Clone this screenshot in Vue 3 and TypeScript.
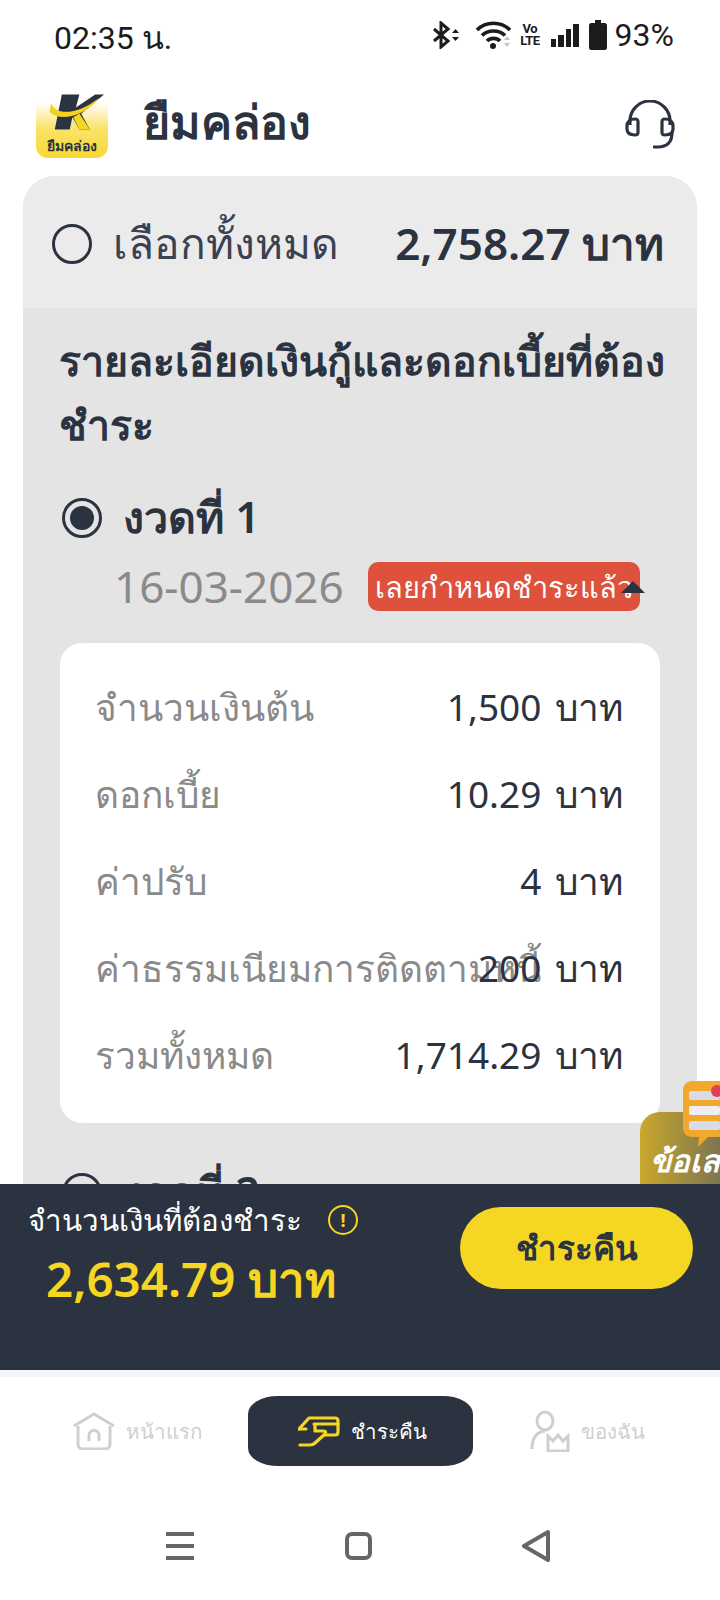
<script setup lang="ts">
const rows: { id: number; label: string; value: string }[] = [
  { id: 1, label: 'จำนวนเงินต้น', value: '1,500' },
  { id: 2, label: 'ดอกเบี้ย', value: '10.29' },
  { id: 3, label: 'ค่าปรับ', value: '4' },
  { id: 4, label: 'ค่าธรรมเนียมการติดตามหนี้', value: '200' },
  { id: 5, label: 'รวมทั้งหมด', value: '1,714.29' }
];
</script>

<template>
  <div class="screen">
    <div class="status-bar">
      <span class="time">02:35 น.</span>
      <div class="status-icons">
        <svg class="ic-bt" width="30" height="28" viewBox="0 0 30 28" fill="none">
          <path d="M3 8l14 12-7 6V2l7 6L3 20" stroke="#1c1c1c" stroke-width="3" />
          <path d="M21 12l3.500-4 3.500 4zM21 16l3.500 4 3.500-4z" fill="#1c1c1c" />
        </svg>
        <svg class="ic-wifi" width="38" height="30" viewBox="0 0 38 30" fill="none">
          <path d="M2 10c9-9 24-9 33 0M7 15.500c6-6 17-6 23 0M12 21c3.500-3.500 9.500-3.500 13 0" stroke="#1c1c1c" stroke-width="3.600" />
          <circle cx="18" cy="26" r="3" fill="#1c1c1c" />
          <path d="M29 20l3-4 3 4zM29 23l3 4 3-4z" fill="#c4c4c4" />
        </svg>
        <div class="volte"><span>Vo</span><span>LTE</span></div>
        <div class="signal">
          <i style="height: 8px"></i>
          <i style="height: 12px"></i>
          <i style="height: 18px"></i>
          <i style="height: 23px"></i>
        </div>
        <svg class="ic-batt" width="18" height="30" viewBox="0 0 18 30">
          <path d="M6 0h6v3h3.500A2.500 2.500 0 0 1 18 5.500V27.500A2.500 2.500 0 0 1 15.500 30H2.500A2.500 2.500 0 0 1 0 27.500V5.500A2.500 2.500 0 0 1 2.500 3H6z" fill="#1c1c1c" />
        </svg>
        <span class="pct">93%</span>
      </div>
    </div>

    <header class="app-header">
      <div class="logo">
        <svg class="logo-k" width="58" height="40" viewBox="0 0 66 44">
          <path d="M18 2h20l-4 15L56 2h10L40 24l10 18H38L30 28l-3 14H10z" fill="#2b3240" />
          <path d="M38 24l12 18H38L31 28z" fill="#f5d623" />
          <path d="M6 12c4 14 30 14 54-6-14 20-44 28-56 16z" fill="#f5d01e" />
        </svg>
        <span class="logo-text">ยืมคล่อง</span>
      </div>
      <h1 class="app-title">ยืมคล่อง</h1>
      <svg class="headset" width="50" height="50" viewBox="0 0 50 50" fill="none" stroke="#2b3240" stroke-width="3.200">
        <path d="M5 25V21a20 20 0 0 1 40 0v4" />
        <path d="M10 19c-5 0-8 3-8 7v3c0 4 3 6 8 6 3 0 3-1 3-3V22c0-2 0-3-3-3z" />
        <path d="M40 19c5 0 8 3 8 7v3c0 4-3 6-8 6-3 0-3-1-3-3V22c0-2 0-3 3-3z" />
        <path d="M47 33c0 9-5 14-14 14h-5" />
      </svg>
    </header>

    <main class="content">
      <section class="card">
        <div class="select-all">
          <span class="radio"></span>
          <span class="select-label">เลือกทั้งหมด</span>
          <span class="select-total">2,758.27 บาท</span>
        </div>
        <div class="details">
          <h2 class="details-title">รายละเอียดเงินกู้และดอกเบี้ยที่ต้องชำระ</h2>
          <div class="term-head">
            <span class="radio checked"></span>
            <span class="term-name">งวดที่ 1</span>
          </div>
          <div class="term-sub">
            <span class="term-date">16-03-2026</span>
            <span class="tag">เลยกำหนดชำระแล้ว<i class="caret"></i></span>
          </div>
          <div class="breakdown">
            <div v-for="row in rows" :key="row.id" class="row">
              <span class="row-label">{{ row.label }}</span>
              <span class="row-value">{{ row.value }} บาท</span>
            </div>
          </div>
          <div class="term-head next">
            <span class="radio"></span>
            <span class="term-name">งวดที่ 2</span>
          </div>
        </div>
      </section>

      <div class="promo">
        <svg class="promo-bubble" width="38" height="68" viewBox="0 0 38 68">
          <path d="M10 2h28v56H26l-10 10 1-10h-7c-5 0-9-4-9-9V11C1 6 5 2 10 2z" fill="#f0a92c" />
          <rect x="7" y="12" width="31" height="9" rx="2" fill="#d9dce6" />
          <rect x="7" y="27" width="31" height="9" rx="2" fill="#eceef2" />
          <rect x="7" y="42" width="31" height="9" rx="2" fill="#d9dce6" />
          <circle cx="35" cy="12" r="6" fill="#e0405a" />
        </svg>
        <span class="promo-text">ข้อเสนอ</span>
      </div>
    </main>

    <section class="pay-bar">
      <div class="pay-info">
        <div class="pay-label">
          <span>จำนวนเงินที่ต้องชำระ</span>
          <span class="pay-hint">!</span>
        </div>
        <div class="pay-amount">2,634.79 บาท</div>
      </div>
      <button class="pay-btn">ชำระคืน</button>
    </section>

    <nav class="tabs">
      <div class="tab">
        <svg width="42" height="38" viewBox="0 0 42 38" fill="none" stroke="#cfcfcf" stroke-width="3">
          <path d="M1 14L21 2l20 12" />
          <path d="M5 14v18c0 3 2 5 5 5h22c3 0 5-2 5-5V14" />
          <path d="M16 29v-6c0-6 10-6 10 0v6" />
        </svg>
        <span>หน้าแรก</span>
      </div>
      <div class="tab active">
        <svg width="42" height="31" viewBox="0 0 42 31" fill="none" stroke="#f5d623" stroke-width="3.200" stroke-linejoin="round" stroke-linecap="round">
          <path d="M1 13L11 2H37Q40 2 40 5V16Q40 19 37 19H26" />
          <path d="M16 8H40M1 13H8" />
          <path d="M17 9V15H25Q29 15 27 18L17 27Q15 29 12 29H2" />
        </svg>
        <span>ชำระคืน</span>
      </div>
      <div class="tab">
        <svg width="40" height="42" viewBox="0 0 40 42" fill="none" stroke="#cfcfcf" stroke-width="3">
          <ellipse cx="15" cy="11" rx="8" ry="9" />
          <path d="M2 39c0-10 4-17 13-18" />
          <path d="M18 26l5 5 5-6 5 6 5-5v15H18z" />
        </svg>
        <span>ของฉัน</span>
      </div>
    </nav>

    <div class="sys-nav">
      <div class="sys-menu"><i></i><i></i><i></i></div>
      <span class="sys-home"></span>
      <svg class="sys-back" width="30" height="32" viewBox="0 0 30 32" fill="none" stroke="#666" stroke-width="4" stroke-linejoin="round">
        <path d="M27 2L3 16l24 14z" />
      </svg>
    </div>
  </div>
</template>

<style scoped>
.screen {
  position: relative;
  display: flex;
  flex-direction: column;
  width: 720px;
  height: 1600px;
  overflow: hidden;
  background: #fff;
  color: #2b3240;
  font-family: "Noto Sans", "Open Sans", sans-serif;
}

.status-bar {
  display: flex;
  flex: none;
  align-items: center;
  justify-content: space-between;
  height: 74px;
  padding: 0 46px 0 54px;
  color: #1c1c1c;
  font-family: Roboto, sans-serif;
}

.time {
  font-size: 32px;
}

.status-icons {
  display: flex;
  align-items: center;
  margin-top: -4px;
}

.ic-bt {
  margin-right: 14px;
}

.ic-wifi {
  margin-right: 7px;
}

.volte {
  display: flex;
  flex-direction: column;
  margin-right: 11px;
  font-size: 13px;
  font-weight: 700;
  letter-spacing: -0.5px;
  line-height: 12px;
  text-align: center;
}

.signal {
  display: flex;
  align-items: flex-end;
  gap: 2px;
  margin-right: 10px;
}

.signal i {
  display: block;
  width: 5.500px;
  background: #1c1c1c;
}

.ic-batt {
  margin-right: 8px;
}

.pct {
  font-size: 32px;
}

.app-header {
  display: flex;
  flex: none;
  align-items: center;
  height: 102px;
  padding: 0 45px 0 36px;
}

.logo {
  position: relative;
  flex: none;
  width: 72px;
  height: 66px;
  border-radius: 0 0 12px 12px;
  background: linear-gradient(#fff 15%, #fbe36b 55%, #f7d732);
}

.logo-k {
  position: absolute;
  top: 0;
  left: 10px;
}

.logo-text {
  position: absolute;
  right: 0;
  bottom: 3px;
  left: 0;
  color: #2b3240;
  font-size: 14px;
  font-weight: 700;
  line-height: 18px;
  text-align: center;
}

.app-title {
  flex: 1;
  margin: 0 0 6px 35px;
  font-size: 46.500px;
  font-weight: 600;
}

.content {
  position: relative;
  flex: none;
  height: 1008px;
  overflow: hidden;
  padding: 0 23px;
  box-sizing: border-box;
}

.card {
  border-radius: 32px 32px 0 0;
  overflow: hidden;
  background: #e4e4e4;
}

.select-all {
  display: flex;
  align-items: center;
  box-sizing: border-box;
  height: 132px;
  padding: 4px 33px 0 29px;
  background: #ebebec;
}

.radio {
  flex: none;
  display: flex;
  align-items: center;
  justify-content: center;
  width: 40px;
  height: 40px;
  box-sizing: border-box;
  border: 3.500px solid #2b3240;
  border-radius: 50%;
}

.radio.checked::after {
  content: "";
  width: 24px;
  height: 24px;
  border-radius: 50%;
  background: #2b3240;
}

.select-label {
  flex: 1;
  margin-left: 21px;
  font-size: 42.500px;
  color: #3a4150;
  white-space: nowrap;
}

.select-total {
  font-size: 44px;
  font-weight: 600;
  white-space: nowrap;
}

.details {
  padding: 20px 37px 0 36px;
}

.details-title {
  margin: 0 -12px 0 0;
  font-size: 41px;
  font-weight: 600;
  line-height: 64px;
}

.term-head {
  display: flex;
  align-items: center;
  height: 40px;
  margin-top: 42px;
  padding-left: 3px;
}

.term-name {
  margin-left: 21px;
  font-size: 43px;
  font-weight: 600;
  white-space: nowrap;
}

.term-sub {
  display: flex;
  align-items: center;
  margin-top: 18px;
  padding-left: 55px;
}

.term-date {
  width: 254px;
  color: #8a8a8a;
  font-size: 44px;
  white-space: nowrap;
}

.tag {
  position: relative;
  box-sizing: border-box;
  width: 272px;
  height: 49px;
  padding-left: 7px;
  border-radius: 10px;
  background: #de513d;
  color: #fff;
  font-size: 29px;
  line-height: 49px;
  white-space: nowrap;
}

.caret {
  position: absolute;
  top: 19px;
  right: -5px;
  width: 0;
  height: 0;
  border-right: 12px solid transparent;
  border-bottom: 12px solid #2b3240;
  border-left: 12px solid transparent;
}

.breakdown {
  box-sizing: border-box;
  height: 480px;
  margin: 27px 0 0 1px;
  padding: 21px 37px 0 35px;
  border-radius: 22px;
  background: #fff;
}

.row {
  position: relative;
  display: flex;
  align-items: center;
  justify-content: flex-end;
  height: 87px;
  font-size: 37px;
}

.row-label {
  position: absolute;
  left: 0;
  color: #8a8a8a;
  white-space: nowrap;
}

.row-value {
  position: relative;
  white-space: nowrap;
  word-spacing: 4px;
}

.term-head.next {
  margin-top: 50px;
}

.promo {
  position: absolute;
  right: 0;
  bottom: 0;
  width: 80px;
  height: 72px;
  border-radius: 20px 0 0 0;
  background: linear-gradient(90deg, #c9a82c, #7d7550);
}

.promo-bubble {
  position: absolute;
  top: -33px;
  right: 0;
}

.promo-text {
  position: absolute;
  top: 24px;
  left: 10px;
  color: #fff;
  font-size: 31px;
  font-style: italic;
  font-weight: 700;
  white-space: nowrap;
}

.pay-bar {
  position: relative;
  display: flex;
  flex: none;
  box-sizing: border-box;
  height: 186px;
  padding: 0 27px 0 28px;
  justify-content: space-between;
  background: #2b3240;
}

.pay-label {
  display: flex;
  align-items: center;
  height: 36px;
  margin-top: 18px;
  color: #fff;
  font-size: 29.500px;
  white-space: nowrap;
}

.pay-hint {
  display: flex;
  align-items: center;
  justify-content: center;
  box-sizing: border-box;
  width: 30px;
  height: 30px;
  margin-left: 26px;
  border: 2.500px solid #f5d623;
  border-radius: 50%;
  color: #f5d623;
  font-size: 18px;
  font-weight: 700;
}

.pay-amount {
  margin: 11px 0 0 18px;
  color: #f5d623;
  font-size: 47.500px;
  font-weight: 600;
  line-height: 60px;
  white-space: nowrap;
}

.pay-btn {
  width: 233px;
  height: 82px;
  margin-top: 23px;
  border: 0;
  border-radius: 41px;
  background: #f5d623;
  color: #2b3240;
  font-family: inherit;
  font-size: 33px;
  font-weight: 600;
}

.tabs {
  display: flex;
  flex: none;
  align-items: flex-start;
  justify-content: center;
  box-sizing: border-box;
  height: 116px;
  padding-top: 19px;
  border-top: 7px solid #f3f5f7;
}

.tab {
  display: flex;
  align-items: center;
  justify-content: center;
  gap: 11px;
  box-sizing: border-box;
  width: 225px;
  height: 70px;
  padding-left: 5px;
  color: #cfcfcf;
  font-size: 20.500px;
}

.tab.active {
  border-radius: 30px / 18px;
  background: #2b3240;
  color: #fff;
}

.sys-nav {
  display: flex;
  flex: 1;
  align-items: center;
  justify-content: center;
  gap: 151px;
  padding: 6px 3px 0 0;
}

.sys-menu {
  display: flex;
  flex-direction: column;
  gap: 8px;
  width: 28px;
}

.sys-menu i {
  display: block;
  height: 4px;
  background: #666;
}

.sys-home {
  box-sizing: border-box;
  width: 27px;
  height: 28px;
  border: 4px solid #666;
  border-radius: 7px;
}

.sys-back {
  margin-left: -2px;
}
</style>

<style>
body {
  background: #fff;
}
</style>
